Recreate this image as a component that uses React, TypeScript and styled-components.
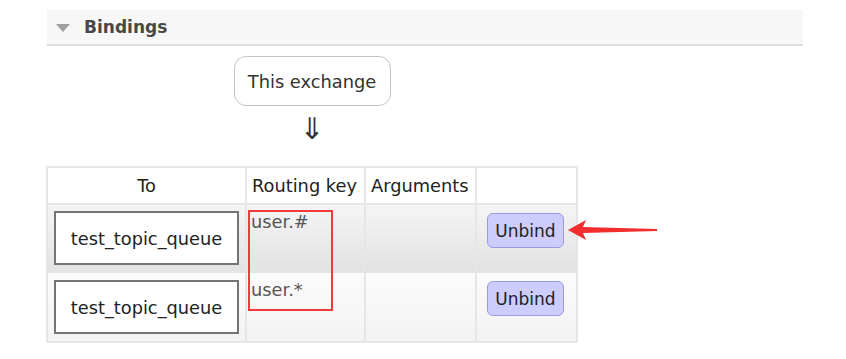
import React from 'react'
import styled, { createGlobalStyle } from 'styled-components'

const GlobalStyle = createGlobalStyle`
  body {
    margin: 0;
    background: #ffffff;
    font-family: 'DejaVu Sans', Verdana, sans-serif;
    color: #222222;
  }
`

const Page = styled.div`
  padding: 10px 0 0 47px;
  width: 756px;
`

const SectionHeader = styled.div`
  display: flex;
  align-items: center;
  height: 34px;
  background: #f7f7f7;
  border-bottom: 2px solid #dddddd;
  padding-left: 9px;
  gap: 14px;
`

const Toggle = styled.span`
  width: 0;
  height: 0;
  border-left: 7px solid transparent;
  border-right: 7px solid transparent;
  border-top: 8px solid #a0a0a0;
  margin-top: 2px;
`

const SectionTitle = styled.h2`
  margin: 0;
  font-size: 17px;
  font-weight: bold;
  color: #484848;
`

const Content = styled.div`
  position: relative;
  width: 530px;
  display: flex;
  flex-direction: column;
  align-items: center;
`

const ExchangeBox = styled.div`
  margin-top: 10px;
  width: 155px;
  height: 48px;
  border: 1.5px solid #c4c4c4;
  border-radius: 12px;
  display: flex;
  align-items: center;
  justify-content: center;
  font-size: 17.8px;
  color: #333;
`

const DownArrow = styled.div`
  margin-top: 6px;
  height: 54px;
  font-size: 30px;
  line-height: 34px;
  color: #333;
`

const Table = styled.table`
  width: 530px;
  table-layout: fixed;
  border-collapse: collapse;
  border: 2px solid #e2e2e2;
  font-size: 17.8px;
`

const HeadRow = styled.tr`
  height: 37px;
`

const HeadCell = styled.th<{ $w: number; $align?: string }>`
  box-sizing: border-box;
  width: ${(p) => p.$w}px;
  padding: 0 5px;
  border: 2px solid #e6e6e6;
  font-weight: normal;
  white-space: nowrap;
  text-align: ${(p) => p.$align || 'left'};
  background: #fff;
  color: #222;
`

const Row = styled.tr<{ $alt?: boolean; $h: number }>`
  height: ${(p) => p.$h}px;
  background: ${(p) =>
    p.$alt
      ? 'linear-gradient(#fbfbfb, #f3f3f3)'
      : 'linear-gradient(#f5f5f5, #e2e2e2)'};
`

const Cell = styled.td<{ $pad?: string; $top?: boolean }>`
  padding: ${(p) => p.$pad || '0 6px'};
  border: 2px solid #e6e6e6;
  vertical-align: ${(p) => (p.$top ? 'top' : 'middle')};
  white-space: nowrap;
  color: #555;
`

const QueueBox = styled.div`
  height: 50px;
  border: 2px solid #747474;
  background: #fff;
  display: flex;
  align-items: center;
  justify-content: center;
  color: #222;
`

const Button = styled.button`
  margin-left: 4px;
  width: 77px;
  height: 35px;
  background: #ccccff;
  border: 1.5px solid #9a9ae0;
  border-radius: 6px;
  font-family: 'DejaVu Sans', Verdana, sans-serif;
  font-size: 17px;
  color: #222;
`

const Highlight = styled.div`
  position: absolute;
  left: 201px;
  top: 164px;
  width: 81px;
  height: 97px;
  border: 2px solid #f23a3a;
`

const Pointer = styled.svg`
  position: absolute;
  left: 520px;
  top: 168px;
`

const bindings = [
  { queue: 'test_topic_queue', key: 'user.#', h: 68 },
  { queue: 'test_topic_queue', key: 'user.*', h: 70 },
]

export default function App() {
  return (
    <>
      <GlobalStyle />
      <Page>
        <SectionHeader>
          <Toggle />
          <SectionTitle>Bindings</SectionTitle>
        </SectionHeader>
        <Content>
          <ExchangeBox>This exchange</ExchangeBox>
          <DownArrow>⇓</DownArrow>
          <Table>
            <thead>
              <HeadRow>
                <HeadCell $w={199} $align="center">To</HeadCell>
                <HeadCell $w={119}>Routing key</HeadCell>
                <HeadCell $w={111}>Arguments</HeadCell>
                <HeadCell $w={101} />
              </HeadRow>
            </thead>
            <tbody>
              {bindings.map((b, i) => (
                <Row key={i} $alt={i === 1} $h={b.h}>
                  <Cell>
                    <QueueBox>{b.queue}</QueueBox>
                  </Cell>
                  <Cell $top $pad="6px 4px 0">{b.key}</Cell>
                  <Cell />
                  <Cell $top $pad="8px 6px 0">
                    <Button>Unbind</Button>
                  </Cell>
                </Row>
              ))}
            </tbody>
          </Table>
          <Highlight />
          <Pointer width="92" height="32" viewBox="0 0 92 32">
            <path d="M1 16 L19 6 L16 13 L90 15 L90 17 L16 19 L19 26 Z" fill="#f22e2e" />
          </Pointer>
        </Content>
      </Page>
    </>
  )
}
